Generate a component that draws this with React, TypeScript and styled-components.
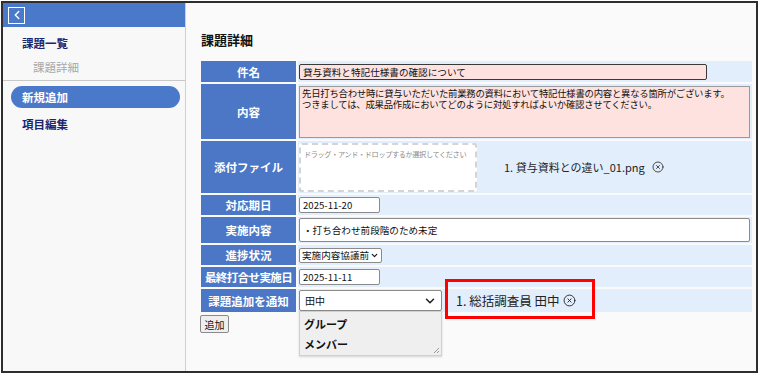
import React from "react";
import styled, { createGlobalStyle } from "styled-components";
import { ChevronLeft, ChevronDown, CircleX } from "lucide-react";

const GlobalStyle = createGlobalStyle`
    html, body {
        margin: 0;
        padding: 0;
        background: #ffffff;
        font-family: "Noto Sans CJK JP", "Noto Sans", sans-serif;
    }
`;

const menu = [
    { title: "課題一覧", sub: false, active: false },
    { title: "課題詳細", sub: true, active: false },
];

const menu2 = [
    { title: "新規追加", active: true },
    { title: "項目編集", active: false },
];

function App()
{
    return <>
        <GlobalStyle />
        <Frame>
            <Sidebar>
                <SideHeader>
                    <BackButton>
                        <ChevronLeft size={14} strokeWidth={2.4} color="#ffffff" />
                    </BackButton>
                </SideHeader>
                <NavList>
                    {menu.map((item) => (
                        <NavItem key={item.title} $sub={item.sub} $active={item.active}>{item.title}</NavItem>
                    ))}
                </NavList>
                <Divider />
                <NavList2>
                    {menu2.map((item) => (
                        <NavItem key={item.title} $sub={false} $active={item.active}>{item.title}</NavItem>
                    ))}
                </NavList2>
            </Sidebar>
            <Main>
                <Title>課題詳細</Title>
                <Table>
                    <Label>件名</Label>
                    <Value>
                        <TextInput readOnly $w={408} $h={16} $pink value="貸与資料と特記仕様書の確認について" />
                    </Value>

                    <Label>内容</Label>
                    <Value>
                        <TextArea readOnly value={"先日打ち合わせ時に貸与いただいた前業務の資料において特記仕様書の内容と異なる箇所がございます。\nつきましては、成果品作成においてどのように対処すればよいか確認させてください。"} />
                    </Value>

                    <Label>添付ファイル</Label>
                    <FileCell>
                        <DropZone>ドラッグ・アンド・ドロップするか選択してください</DropZone>
                        <FileItem>
                            1. 貸与資料との違い_01.png
                            <CircleX size={12} strokeWidth={1.6} color="#222" />
                        </FileItem>
                    </FileCell>

                    <Label>対応期日</Label>
                    <Value>
                        <TextInput readOnly $w={81} $h={16} value="2025-11-20" />
                    </Value>

                    <Label>実施内容</Label>
                    <Value>
                        <TextInput readOnly $w={451} $h={24} value="・打ち合わせ前段階のため未定" />
                    </Value>

                    <Label>進捗状況</Label>
                    <Value>
                        <SmallSelect>
                            実施内容協議前
                            <ChevronDown size={9} strokeWidth={3} color="#111" />
                        </SmallSelect>
                    </Value>

                    <Label $tight>最終打合せ実施日</Label>
                    <Value>
                        <TextInput readOnly $w={81} $h={16} value="2025-11-11" />
                    </Value>

                    <Label>課題追加を通知</Label>
                    <NotifyCell>
                        <SelectWrap>
                            <BigSelect>
                                田中
                                <ChevronDown size={14} strokeWidth={2.6} color="#222" />
                            </BigSelect>
                            <DropList>
                                <Option>グループ</Option>
                                <Option>メンバー</Option>
                                <Grip viewBox="0 0 8 8">
                                    <path d="M7 2 L2 7 M7 5 L5 7" stroke="#999" strokeWidth="1" />
                                </Grip>
                            </DropList>
                        </SelectWrap>
                        <Notified>
                            1. 総括調査員 田中
                            <CircleX size={13} strokeWidth={1.7} color="#222" />
                        </Notified>
                    </NotifyCell>
                </Table>
                <AddButton>追加</AddButton>
            </Main>
        </Frame>
    </>;
}

const Frame = styled.div`
    box-sizing: border-box;
    margin: 1px 0 0 1px;
    width: 757px;
    height: 372px;
    border: 2px solid #2e2e2e;
    display: flex;
    background: #fafafa;
    overflow: hidden;
`;

const Sidebar = styled.nav`
    width: 182px;
    flex: none;
    background: #f8f8f8;
    border-right: 1px solid #cfcfcf;
    display: flex;
    flex-direction: column;
`;

const SideHeader = styled.div`
    height: 24px;
    background: #4b79c9;
    display: flex;
    align-items: center;
    padding-left: 5px;
`;

const BackButton = styled.div`
    width: 15px;
    height: 15px;
    border: 1px solid #ffffff;
    display: flex;
    align-items: center;
    justify-content: center;
`;

const NavList = styled.div`
    display: flex;
    flex-direction: column;
    padding: 4px 0 1px;
`;

const NavList2 = styled.div`
    display: flex;
    flex-direction: column;
    padding: 5px 0 0;
    gap: 4px;
`;

const Divider = styled.div`
    height: 1px;
    background: #c8c8c8;
`;

const NavItem = styled.div<{ $sub: boolean; $active: boolean }>`
    height: ${(p) => (p.$active ? "22px" : "24px")};
    display: flex;
    align-items: center;
    margin: 0 5px 0 8px;
    padding-left: ${(p) => (p.$sub ? "22px" : "11px")};
    border-radius: 12px;
    font-size: 11.5px;
    font-weight: ${(p) => (p.$sub ? 400 : 700)};
    color: ${(p) => (p.$active ? "#ffffff" : p.$sub ? "#a8a8a8" : "#1b2670")};
    background: ${(p) => (p.$active ? "#4b79c9" : "transparent")};
`;

const Main = styled.main`
    flex: 1;
    padding: 27px 4px 0 15px;
    display: flex;
    flex-direction: column;
    align-items: flex-start;
`;

const Title = styled.h1`
    margin: 0 0 11px;
    font-size: 13px;
    line-height: 20px;
    font-weight: 700;
    color: #111;
`;

const Table = styled.div`
    width: 551px;
    display: grid;
    grid-template-columns: 95px 1fr;
    grid-template-rows: 21px 55px 52px 20px 26px 20px 20px 23px;
    gap: 2px;
`;

const Label = styled.div<{ $tight?: boolean }>`
    background: #4b77c6;
    color: #ffffff;
    font-size: 11.5px;
    font-weight: 700;
    display: flex;
    align-items: center;
    justify-content: center;
    letter-spacing: ${(p) => (p.$tight ? "-0.6px" : "0")};
    white-space: nowrap;
`;

const Value = styled.div`
    background: #e3eefc;
    display: flex;
    align-items: center;
    padding: 0 1px;
    min-width: 0;
`;

const TextInput = styled.input<{ $w: number; $h: number; $pink?: boolean }>`
    box-sizing: border-box;
    width: ${(p) => p.$w}px;
    height: ${(p) => p.$h}px;
    margin: 0;
    padding: 0 3px;
    border: 1px solid ${(p) => (p.$pink ? "#3a3a3a" : "#8a8a8a")};
    border-radius: 2px;
    background: ${(p) => (p.$pink ? "#fde2df" : "#ffffff")};
    font-family: inherit;
    font-size: 9.6px;
    color: #111;
    outline: none;
`;

const TextArea = styled.textarea`
    box-sizing: border-box;
    width: 451px;
    height: 52px;
    margin: 0;
    padding: 1px 2px;
    border: 1px solid #9a9a9a;
    background: #fde2df;
    font-family: inherit;
    font-size: 9.4px;
    letter-spacing: -0.25px;
    line-height: 11px;
    color: #111;
    white-space: pre;
    resize: none;
    outline: none;
    overflow: hidden;
`;

const FileCell = styled(Value)`
    gap: 27px;
`;

const DropZone = styled.div`
    box-sizing: border-box;
    width: 178px;
    height: 49px;
    border: 2px dashed #d4d4d4;
    border-radius: 3px;
    background: #ffffff;
    padding: 4px 3px;
    font-size: 7.2px;
    color: #8a8a8a;
    white-space: nowrap;
    letter-spacing: -0.4px;
`;

const FileItem = styled.div`
    display: flex;
    align-items: center;
    gap: 7px;
    font-size: 11px;
    color: #222;
`;

const SmallSelect = styled.div`
    box-sizing: border-box;
    height: 15px;
    width: 83px;
    border: 1px solid #8a8a8a;
    border-radius: 2px;
    background: #ffffff;
    display: flex;
    align-items: center;
    justify-content: space-between;
    padding: 0 2px 0 2px;
    font-size: 9.6px;
    color: #111;
    white-space: nowrap;
`;

const NotifyCell = styled(Value)`
    gap: 14px;
    overflow: visible;
`;

const SelectWrap = styled.div`
    position: relative;
`;

const BigSelect = styled.div`
    box-sizing: border-box;
    width: 143px;
    height: 21px;
    border: 1px solid #8a8a8a;
    border-radius: 2px;
    background: #ffffff;
    display: flex;
    align-items: center;
    justify-content: space-between;
    padding: 0 4px 0 5px;
    font-size: 10px;
    color: #111;
`;

const DropList = styled.div`
    position: absolute;
    left: 0;
    top: 21px;
    box-sizing: border-box;
    width: 143px;
    height: 45px;
    background: #efefef;
    border: 1px solid #d0d0d0;
    box-shadow: 0 1px 2px rgba(0, 0, 0, 0.15);
    display: flex;
    flex-direction: column;
    padding: 2px 0 0 4px;
    z-index: 2;
`;

const Option = styled.div`
    height: 20px;
    display: flex;
    align-items: center;
    font-size: 11px;
    font-weight: 700;
    color: #111;
`;

const Grip = styled.svg`
    position: absolute;
    right: 1px;
    bottom: 1px;
    width: 8px;
    height: 8px;
`;

const Notified = styled.div`
    position: relative;
    display: flex;
    align-items: center;
    gap: 3px;
    font-size: 12.5px;
    color: #222;

    &::after {
        content: "";
        position: absolute;
        left: -11px;
        top: -12px;
        width: 150px;
        height: 40px;
        box-sizing: border-box;
        border: 3px solid #ff0000;
    }
`;

const AddButton = styled.button`
    margin: 3px 0 0 -1px;
    box-sizing: border-box;
    height: 18px;
    width: 29px;
    padding: 0;
    border: 1px solid #8a8a8a;
    border-radius: 2px;
    background: #efefef;
    font-family: inherit;
    font-size: 10px;
    color: #111;
`;

export default App;
